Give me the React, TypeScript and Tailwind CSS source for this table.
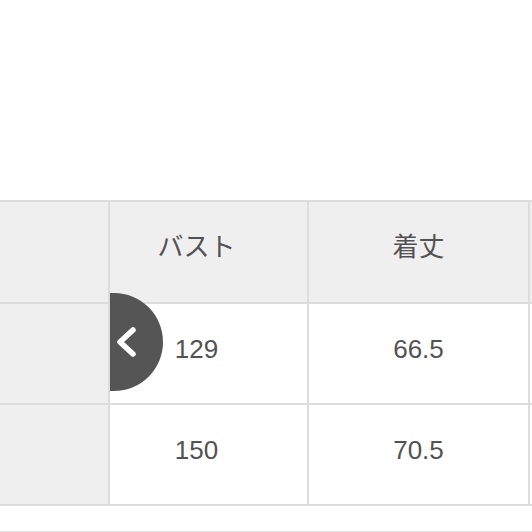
export default function App() {
  const rows = [
    { label: "", bust: "129", length: "66.5" },
    { label: "", bust: "150", length: "70.5" },
  ]

  return (
    <div
      className="w-[532px] h-[532px] bg-white overflow-hidden relative"
      style={{ fontFamily: '"Liberation Sans", "Noto Sans CJK JP", sans-serif' }}
    >
      <div className="pt-[200px]">
        <div className="grid grid-cols-[108px_197px_219px_1fr] grid-rows-[100px_99px_99px] gap-[2px] py-[2px] bg-[#dcdcdc] text-[26px] text-[#525252]">
          <div className="bg-[#efefef]" />
          <div className="bg-[#efefef] flex items-center justify-center pb-[9px] pr-[24px]">バスト</div>
          <div className="bg-[#efefef] flex items-center justify-center pb-[9px]">着丈</div>
          <div className="bg-[#efefef]" />
          {rows.map((r) => (
            <div key={r.bust} className="contents">
              <div className="bg-[#efefef]">{r.label}</div>
              <div className="bg-white flex items-center justify-center pb-[9px] pr-[24px]">{r.bust}</div>
              <div className="bg-white flex items-center justify-center pb-[9px]">{r.length}</div>
              <div className="bg-white" />
            </div>
          ))}
        </div>
        <div className="mt-[25px] border-t border-[#e4e4e4]" />
      </div>

      <button className="absolute left-[110px] top-[293px] w-[53px] h-[98px] rounded-r-[49px] bg-[#555555] flex items-center pl-[5px]">
        <svg width="24" height="36" viewBox="0 0 24 36" fill="none">
          <polyline points="18 6 5 18 18 30" stroke="white" strokeWidth="5.5" strokeLinecap="round" strokeLinejoin="round" />
        </svg>
      </button>
    </div>
  )
}
